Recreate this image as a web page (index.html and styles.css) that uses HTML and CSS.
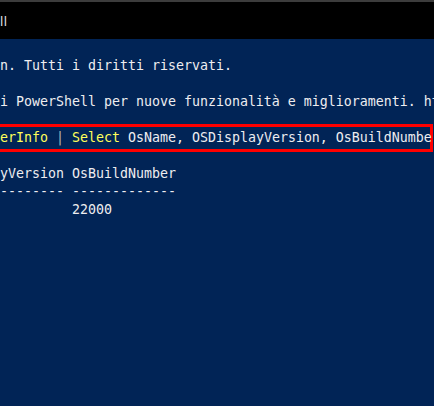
FILE: index.html
```html
<!DOCTYPE html>
<html lang="it">
<head>
<meta charset="utf-8">
<title>Windows PowerShell</title>
<link rel="stylesheet" href="styles.css">
</head>
<body>
<div class="window">
  <div class="titlebar"><span class="title">ll</span></div>
  <div class="console">
    <div class="line">n. Tutti i diritti riservati.</div>
    <div class="line"> </div>
    <div class="line">i PowerShell per nuove funzionalità e miglioramenti. ht</div>
    <div class="line"> </div>
    <div class="line cmd"><span class="yellow">erInfo</span> <span class="op">|</span> <span class="yellow">Select</span> OsName, OSDisplayVersion, OsBuildNumbe</div>
    <div class="line"> </div>
    <div class="line">yVersion OsBuildNumber</div>
    <div class="line">-------- -------------</div>
    <div class="line">         22000</div>
  </div>
</div>
</body>
</html>
```

FILE: styles.css
```css
html, body {
  margin: 0;
  padding: 0;
  width: 434px;
  height: 406px;
  overflow: hidden;
  background: #012456;
}
.window {
  display: flex;
  flex-direction: column;
  height: 406px;
}
.titlebar {
  height: 37px;
  background: #000;
  border-top: 2px solid #3c3c3c;
  display: flex;
  align-items: center;
}
.title {
  font-family: "Open Sans", "Noto Sans", sans-serif;
  font-size: 13px;
  color: #e8e8e8;
  letter-spacing: 0.5px;
}
.console {
  flex: 1;
  background: #012456;
  padding-top: 18px;
  font-family: "DejaVu Sans Mono", monospace;
  font-size: 13.29px;
  line-height: 18px;
  color: #eeedf0;
}
.line {
  white-space: pre;
  height: 18px;
}
.cmd {
  border-top: 3px solid #ff0000;
  border-bottom: 3px solid #ff0000;
  border-right: 3px solid #ff0000;
  width: 430px;
  padding: 2px 0;
  margin: -5px 0;
}
.yellow { color: #ffff5a; }
.op { color: #b4b4b4; }
```
